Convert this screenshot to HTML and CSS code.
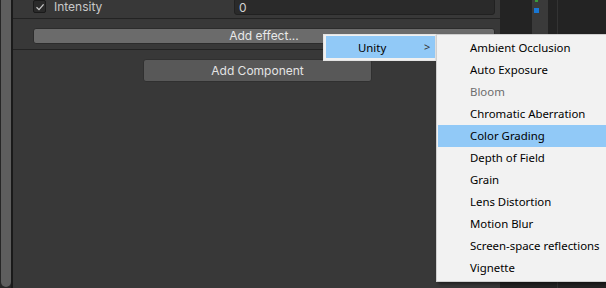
FILE: index.html
```html
<!DOCTYPE html>
<html>
<head>
<meta charset="utf-8">
<link rel="stylesheet" href="styles.css">
</head>
<body>
<div class="app">
  <div class="scroll"><div class="thumb"></div></div>
  <div class="gap"></div>
  <div class="panel">
    <div class="row">
      <div class="check"><svg width="10" height="10" viewBox="0 0 10 10"><path d="M1.5 5.2 L4 7.6 L8.6 2.4" fill="none" stroke="#c8c8c8" stroke-width="1.3"/></svg></div>
      <div class="label">Intensity</div>
      <div class="field">0</div>
    </div>
    <div class="sep"></div>
    <div class="effect-wrap"><div class="btn-effect">Add effect...</div></div>
    <div class="sep"></div>
    <div class="comp-wrap"><div class="btn-comp">Add Component</div></div>
  </div>
  <div class="side">
    <div class="side-col"><div class="green"></div><div class="blue"></div></div>
    <div class="side-line"></div>
  </div>
</div>
<div class="menu">
  <div class="item hi"><span>Unity</span><span class="arrow">&gt;</span></div>
</div>
<div class="submenu">
  <div class="sitem">Ambient Occlusion</div>
  <div class="sitem">Auto Exposure</div>
  <div class="sitem dis">Bloom</div>
  <div class="sitem">Chromatic Aberration</div>
  <div class="sitem hi">Color Grading</div>
  <div class="sitem">Depth of Field</div>
  <div class="sitem">Grain</div>
  <div class="sitem">Lens Distortion</div>
  <div class="sitem">Motion Blur</div>
  <div class="sitem">Screen-space reflections</div>
  <div class="sitem">Vignette</div>
</div>
</body>
</html>
```

FILE: styles.css
```css
html, body {
  margin: 0;
  padding: 0;
  width: 606px;
  height: 288px;
  overflow: hidden;
  background: #1f1f1f;
}
.app {
  display: flex;
  height: 288px;
}
.scroll {
  width: 11px;
  background: #262626;
  padding-left: 1px;
  box-sizing: border-box;
}
.thumb {
  width: 10px;
  height: 287px;
  background: #5e5e5e;
  border-radius: 0 0 5px 5px;
}
.gap {
  width: 2px;
  background: #1a1a1a;
}
.panel {
  width: 487px;
  background: #383838;
  font-family: Inter, "Noto Sans", sans-serif;
  font-size: 12px;
  color: #c8c8c8;
  display: flex;
  flex-direction: column;
}
.row {
  display: flex;
  align-items: center;
  height: 18px;
  margin-top: -3px;
  padding-left: 20px;
}
.check {
  width: 11px;
  height: 11px;
  background: #2a2a2a;
  border: 1px solid #1a1a1a;
  border-radius: 2px;
  display: flex;
  align-items: center;
  justify-content: center;
  margin-top: 1px;
}
.label {
  margin-left: 8px;
  width: 180px;
}
.field {
  margin-left: 0;
  width: 261px;
  height: 17px;
  box-sizing: border-box;
  background: #2a2a2a;
  border: 1px solid #212121;
  border-radius: 3px;
  padding: 2px 0 0 4px;
  line-height: 14px;
  color: #d2d2d2;
}
.sep {
  height: 1px;
  background: #232323;
  margin-top: 3px;
}
.effect-wrap {
  padding: 9px 5px 0 20px;
  height: 27px;
  box-sizing: border-box;
}
.btn-effect {
  height: 16px;
  background: #6b6b6b;
  border: 1px solid #2c2c2c;
  border-radius: 3px;
  box-sizing: border-box;
  text-align: center;
  line-height: 14px;
  color: #e8e8e8;
  width: 462px;
}
.effect-wrap + .sep {
  margin-top: 3px;
}
.comp-wrap {
  padding-top: 9px;
  padding-left: 130px;
}
.btn-comp {
  width: 229px;
  height: 23px;
  box-sizing: border-box;
  background: #585858;
  border: 1px solid #303030;
  border-radius: 3px;
  text-align: center;
  line-height: 21px;
  color: #e4e4e4;
}
.side {
  flex: 1;
  display: flex;
  background: #232323;
  padding-left: 32px;
}
.side-col {
  width: 16px;
  height: 40px;
  background: #3a3a3a;
}
.green {
  width: 3px;
  height: 2px;
  background: #3a9a3a;
  margin-left: 3px;
}
.blue {
  width: 5px;
  height: 5px;
  background: #1877d4;
  margin: 6px 0 0 2px;
}
.side-line {
  width: 1px;
  background: #333333;
  margin-left: 9px;
}
.menu {
  position: absolute;
  left: 323px;
  top: 34px;
  width: 113px;
  height: 27px;
  box-sizing: border-box;
  background: #f0f0f0;
  border: 1px solid #e4e4e4;
  padding: 1px 0 2px 2px;
  font-family: "Noto Sans", sans-serif;
  font-size: 11.4px;
  color: #000;
}
.item {
  height: 22px;
  display: flex;
  align-items: center;
  padding-left: 32px;
  position: relative;
}
.hi {
  background: #91c9f7;
}
.arrow {
  position: absolute;
  left: 98px;
  top: 3px;
  font-size: 11px;
  color: #333;
}
.submenu {
  position: absolute;
  left: 436px;
  top: 34px;
  width: 180px;
  height: 248px;
  box-sizing: border-box;
  background: #f2f2f2;
  border: 1px solid #cfcfcf;
  padding: 2px 0 2px 1px;
  box-shadow: 2px 2px 3px rgba(0, 0, 0, 0.45);
  font-family: "Noto Sans", sans-serif;
  font-size: 11.4px;
  color: #000;
}
.sitem {
  height: 22px;
  line-height: 22px;
  padding-left: 32px;
  white-space: nowrap;
}
.sitem.dis {
  color: #6d6d6d;
}
```
